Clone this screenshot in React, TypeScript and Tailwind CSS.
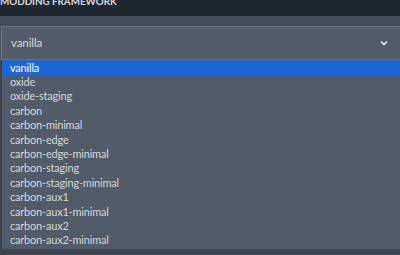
import React from "react";

const items = [
  "vanilla",
  "oxide",
  "oxide-staging",
  "carbon",
  "carbon-minimal",
  "carbon-edge",
  "carbon-edge-minimal",
  "carbon-staging",
  "carbon-staging-minimal",
  "carbon-aux1",
  "carbon-aux1-minimal",
  "carbon-aux2",
  "carbon-aux2-minimal",
];

export default function App() {
  return (
    <div
      className="w-[400px] h-[255px] overflow-hidden bg-[#1f2731] flex flex-col"
      style={{ fontFamily: 'Lato, "Noto Sans", sans-serif' }}
    >
      <div className="h-[16px] shrink-0 bg-[#1f2731] overflow-hidden">
        <div className="mt-[-5px] text-[9.8px] font-bold text-[#d5d9de] leading-[12px] uppercase">
          Modding Framework
        </div>
      </div>
      <div className="h-[10px] shrink-0 bg-[#434d59]" />
      <div className="flex flex-col bg-[#46505c] pl-[1px]">
        <div className="h-[33px] border-t border-l border-[#6e7783] bg-[#535d69] flex items-center pl-[9px] pr-[7px] mr-[-2px]">
          <span className="text-[11.5px] tracking-[-0.1px] text-[#d4d8dc] flex-1">vanilla</span>
          <svg width="8" height="6" viewBox="0 0 8 6" className="mr-[7px]">
            <path d="M1 1.5 L4 4.5 L7 1.5" stroke="#e6e9ec" strokeWidth="1.6" fill="none" />
          </svg>
        </div>
      </div>
      <div className="h-[1px] shrink-0 bg-[#666f7a]" />
      <div className="flex-1 bg-[#3c4550] pl-[1px] pb-[5px] flex flex-col">
        <div className="flex-1 border-l border-b border-[#3a434e] bg-[#525c68] flex flex-col">
          {items.map((it, i) => (
            <div
              key={it}
              className={
                i === 0
                  ? "h-[15px] shrink-0 bg-[#1c66d6] text-white text-[11px] tracking-[-0.2px] leading-[15px] pl-[8px] overflow-hidden"
                  : "h-[14.4px] shrink-0 text-[#d2d6da] text-[11px] tracking-[-0.2px] leading-[14.4px] pl-[8px] overflow-hidden"
              }
            >
              {it}
            </div>
          ))}
        </div>
      </div>
    </div>
  );
}
